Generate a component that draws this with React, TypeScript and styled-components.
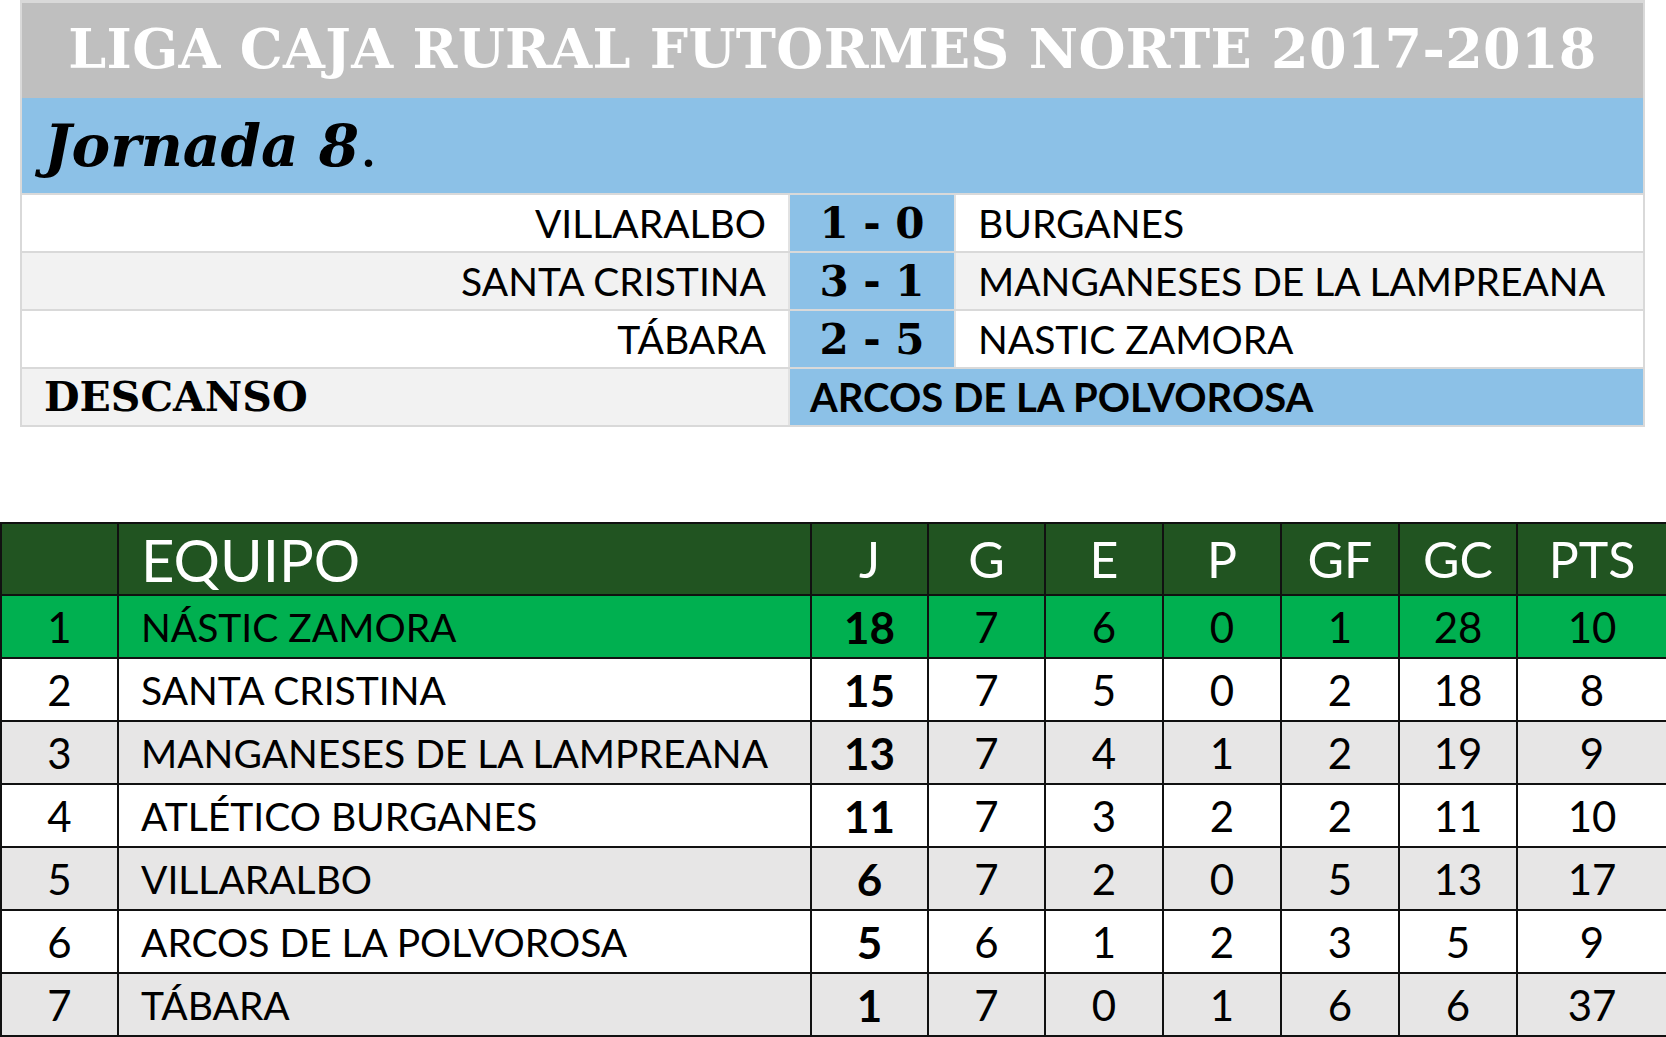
import React from 'react'
import styled, { createGlobalStyle } from 'styled-components'

const GlobalStyle = createGlobalStyle`
  html, body {
    margin: 0;
    padding: 0;
    background: #fff;
    overflow: hidden;
  }
`

const sans = `'Lato', 'Liberation Sans', sans-serif`
const slab = `'DejaVu Serif', 'Liberation Serif', serif`

const Fixtures = styled.div`
  width: 1625px;
  margin-left: 20px;
  border: 2px solid #d9d9d9;
  border-top-width: 3px;
  box-sizing: border-box;
`

const Title = styled.div`
  height: 95px;
  background: #bfbfbf;
  display: flex;
  align-items: center;
  justify-content: center;
  padding-bottom: 4px;
  box-sizing: border-box;
  color: #fff;
  font-family: ${slab};
  font-weight: bold;
  font-size: 54px;
  letter-spacing: 0.3px;
`

const Round = styled.div`
  height: 95px;
  background: #8cc1e7;
  display: flex;
  align-items: center;
  padding-left: 22px;
  font-family: ${slab};
  font-size: 58px;
  color: #000;
  > b {
    font-style: italic;
  }
`

const MatchRow = styled.div<{ $shade?: boolean }>`
  display: grid;
  grid-template-columns: 766px 168px 1fr;
  height: 58px;
  background: ${p => (p.$shade ? '#f2f2f2' : '#fff')};
  border-top: 2px solid #d9d9d9;
  box-sizing: border-box;
`

const Team = styled.div<{ $home?: boolean }>`
  display: flex;
  align-items: center;
  justify-content: ${p => (p.$home ? 'flex-end' : 'flex-start')};
  padding: 0 22px;
  font-family: ${sans};
  font-size: 39px;
  color: #000;
  white-space: nowrap;
`

const Score = styled.div`
  display: flex;
  align-items: center;
  justify-content: center;
  background: #8cc1e7;
  border-left: 2px solid #e2e2e2;
  border-right: 2px solid #e2e2e2;
  font-family: ${slab};
  font-weight: bold;
  font-size: 42px;
  white-space: pre;
`

const RestLabel = styled.div`
  display: flex;
  align-items: center;
  padding-left: 22px;
  font-family: ${slab};
  font-weight: bold;
  font-size: 41px;
`

const RestTeam = styled.div`
  grid-column: 2 / 4;
  display: flex;
  align-items: center;
  padding-left: 20px;
  background: #8cc1e7;
  border-left: 2px solid #e2e2e2;
  font-family: ${sans};
  font-weight: bold;
  font-size: 40px;
`

const Standings = styled.table`
  width: 1666px;
  margin-top: 95px;
  border-collapse: collapse;
  table-layout: fixed;
  font-family: ${sans};
  color: #000;
`

const HeadRow = styled.tr`
  height: 72px;
  background: #215421;
  color: #fff;
`

const Row = styled.tr<{ $tone: 'lead' | 'plain' | 'alt' }>`
  height: 63px;
  background: ${p => (p.$tone === 'lead' ? '#00b050' : p.$tone === 'alt' ? '#e7e6e6' : '#fff')};
`

const Cell = styled.td<{ $left?: boolean; $bold?: boolean; $size: number }>`
  border: 2px solid #111;
  padding: 0 ${p => (p.$left ? '22px' : '0')};
  text-align: ${p => (p.$left ? 'left' : 'center')};
  font-size: ${p => p.$size}px;
  font-weight: ${p => (p.$bold ? 'bold' : 'normal')};
  white-space: nowrap;
  overflow: hidden;
  &:last-child {
    border-right: none;
  }
`

const matches = [
  { home: 'VILLARALBO', score: '1 - 0', away: 'BURGANES' },
  { home: 'SANTA CRISTINA', score: '3 - 1', away: 'MANGANESES DE LA LAMPREANA' },
  { home: 'TÁBARA', score: '2 - 5', away: 'NASTIC ZAMORA' },
]

const columns = ['J', 'G', 'E', 'P', 'GF', 'GC', 'PTS']

const table = [
  ['NÁSTIC ZAMORA', 18, 7, 6, 0, 1, 28, 10],
  ['SANTA CRISTINA', 15, 7, 5, 0, 2, 18, 8],
  ['MANGANESES DE LA LAMPREANA', 13, 7, 4, 1, 2, 19, 9],
  ['ATLÉTICO BURGANES', 11, 7, 3, 2, 2, 11, 10],
  ['VILLARALBO', 6, 7, 2, 0, 5, 13, 17],
  ['ARCOS DE LA POLVOROSA', 5, 6, 1, 2, 3, 5, 9],
  ['TÁBARA', 1, 7, 0, 1, 6, 6, 37],
]

export default function App() {
  return (
    <>
      <GlobalStyle />
      <Fixtures>
        <Title>LIGA CAJA RURAL FUTORMES NORTE 2017-2018</Title>
        <Round>
          <b>Jornada 8</b>.
        </Round>
        {matches.map((m, i) => (
          <MatchRow key={m.home} $shade={i % 2 === 1}>
            <Team $home>{m.home}</Team>
            <Score>{m.score}</Score>
            <Team>{m.away}</Team>
          </MatchRow>
        ))}
        <MatchRow $shade>
          <RestLabel>DESCANSO</RestLabel>
          <RestTeam>ARCOS DE LA POLVOROSA</RestTeam>
        </MatchRow>
      </Fixtures>

      <Standings>
        <colgroup>
          <col style={{ width: 117 }} />
          <col style={{ width: 693 }} />
          <col style={{ width: 117 }} />
          <col style={{ width: 117 }} />
          <col style={{ width: 118 }} />
          <col style={{ width: 118 }} />
          <col style={{ width: 118 }} />
          <col style={{ width: 118 }} />
          <col />
        </colgroup>
        <thead>
          <HeadRow>
            <Cell $size={52} />
            <Cell $size={58} $left>EQUIPO</Cell>
            {columns.map(c => (
              <Cell $size={50} key={c}>{c}</Cell>
            ))}
          </HeadRow>
        </thead>
        <tbody>
          {table.map((r, i) => (
            <Row key={r[0]} $tone={i === 0 ? 'lead' : i % 2 === 1 ? 'plain' : 'alt'}>
              <Cell $size={42}>{i + 1}</Cell>
              <Cell $size={39} $left>{r[0]}</Cell>
              {r.slice(1).map((v, j) => (
                <Cell key={j} $size={j === 0 ? 44 : 42} $bold={j === 0}>{v}</Cell>
              ))}
            </Row>
          ))}
        </tbody>
      </Standings>
    </>
  )
}
